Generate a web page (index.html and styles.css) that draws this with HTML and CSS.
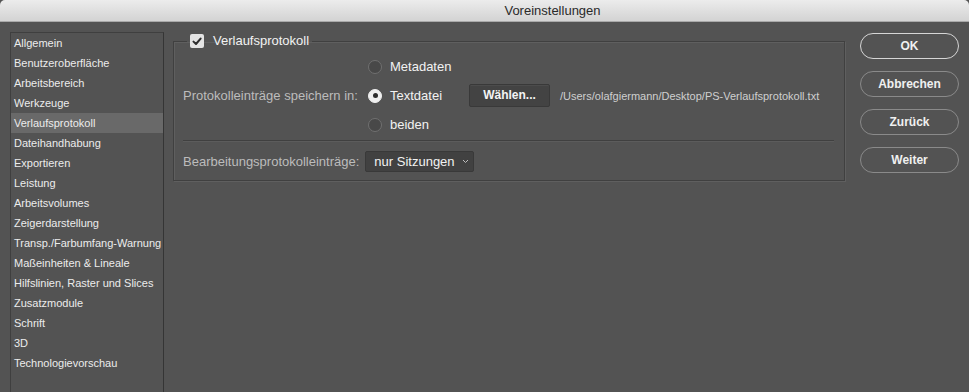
FILE: index.html
```html
<!DOCTYPE html>
<html lang="de">
<head>
  <meta charset="UTF-8" />
  <title>Voreinstellungen</title>
  <link rel="stylesheet" href="styles.css">
</head>
<body>

<div class="titlebar">Voreinstellungen</div>

<div class="dialog">
  <!-- Kategorien -->
  <ul class="sidebar">
    <li>Allgemein</li>
    <li>Benutzeroberfläche</li>
    <li>Arbeitsbereich</li>
    <li>Werkzeuge</li>
    <li class="selected">Verlaufsprotokoll</li>
    <li>Dateihandhabung</li>
    <li>Exportieren</li>
    <li>Leistung</li>
    <li>Arbeitsvolumes</li>
    <li>Zeigerdarstellung</li>
    <li>Transp./Farbumfang-Warnung</li>
    <li>Maßeinheiten &amp; Lineale</li>
    <li>Hilfslinien, Raster und Slices</li>
    <li>Zusatzmodule</li>
    <li>Schrift</li>
    <li>3D</li>
    <li>Technologievorschau</li>
  </ul>

  <div class="main">
    <fieldset class="group">
      <legend>
        <span class="checkbox">
          <svg width="10" height="9" viewBox="0 0 10 9"><path d="M1.5 4.6 L4 7 L8.6 1.6" fill="none" stroke="#2e2e2e" stroke-width="2" stroke-linecap="round" stroke-linejoin="round"/></svg>
        </span>
        Verlaufsprotokoll
      </legend>

      <div class="save-row">
        <div class="label save-label">Protokolleinträge speichern in:</div>
        <div class="options">
          <div class="option"><span class="radio"></span>Metadaten</div>
          <div class="option">
            <span class="radio checked"></span><span class="option-text">Textdatei</span>
            <span class="btn">Wählen...</span>
            <span class="path">/Users/olafgiermann/Desktop/PS-Verlaufsprotokoll.txt</span>
          </div>
          <div class="option"><span class="radio"></span>beiden</div>
        </div>
      </div>

      <div class="separator"></div>

      <div class="edit-row">
        <div class="label">Bearbeitungsprotokolleinträge:</div>
        <div class="select">
          nur Sitzungen
          <svg width="7" height="5" viewBox="0 0 7 5"><path d="M1 1 L3.5 3.5 L6 1" fill="none" stroke="#bdbdbd" stroke-width="1"/></svg>
        </div>
      </div>
    </fieldset>
  </div>

  <div class="actions">
    <div class="pill primary">OK</div>
    <div class="pill">Abbrechen</div>
    <div class="pill">Zurück</div>
    <div class="pill">Weiter</div>
  </div>
</div>

</body>
</html>
```

FILE: styles.css
```css
body {
  margin: 0;
  background-color: #535353;
  font-family: "Liberation Sans", Arial, sans-serif;
  color: #ececec;
  overflow: hidden;
  height: 392px;
}

.titlebar {
  height: 22px;
  line-height: 22px;
  box-sizing: border-box;
  padding-left: 136px;
  text-align: center;
  font-size: 13px;
  color: #2a2a2a;
  background: linear-gradient(#ececec, #d3d3d3);
  border-bottom: 1px solid #a9a9a9;
  border-radius: 5px 5px 0 0;
}

.dialog {
  display: flex;
  padding: 10px 10px 0 10px;
}

.sidebar {
  list-style: none;
  margin: 0;
  padding: 0;
  width: 152px;
  height: 359px;
  border: 1px solid #3f3f3f;
  border-bottom: none;
  border-right-color: #353535;
  font-size: 11px;
}

.sidebar li {
  height: 20px;
  line-height: 20px;
  padding-left: 3px;
  white-space: nowrap;
}

.sidebar li.selected {
  background-color: #696969;
}

.main {
  margin-left: 9px;
  width: 672px;
  padding-top: 2px;
}

.group {
  margin: 0;
  padding: 0 10px 8px 9px;
  border: 1px solid #404040;
  box-shadow: 1px 1px 0 #5f5f5f, inset 1px 1px 0 #5f5f5f;
  min-width: 0;
}

.group legend {
  margin-left: 4px;
  padding: 0 3px;
  font-size: 13px;
  color: #f2f2f2;
  height: 14px;
  line-height: 14px;
  display: flex;
  align-items: center;
  gap: 9px;
}

.checkbox {
  width: 14px;
  height: 14px;
  border-radius: 2px;
  background-color: #e4e4e4;
  display: flex;
  align-items: center;
  justify-content: center;
}

.label {
  font-size: 13px;
  color: #bcbcbc;
  white-space: nowrap;
}

.save-row {
  display: flex;
  align-items: center;
  padding-top: 4px;
}

.save-label {
  width: 174px;
  text-align: right;
}

.options {
  margin-left: 11px;
}

.option {
  height: 29px;
  display: flex;
  align-items: center;
  font-size: 13px;
  color: #f2f2f2;
  white-space: nowrap;
}

.radio {
  width: 12px;
  height: 12px;
  border-radius: 50%;
  border: 1px solid #707070;
  background-color: #484848;
  margin-right: 8px;
  position: relative;
}

.radio.checked {
  background-color: #efefef;
  border-color: #efefef;
}

/* Punkt im ausgewählten Radio */
.radio.checked::after {
  content: "";
  position: absolute;
  left: 3.5px;
  top: 3.5px;
  width: 5px;
  height: 5px;
  border-radius: 50%;
  background-color: #2c2c2c;
}

.option-text {
  width: 79px;
}

.btn {
  width: 79px;
  height: 21px;
  line-height: 21px;
  text-align: center;
  font-size: 12px;
  font-weight: bold;
  color: #f4f4f4;
  background-color: #434343;
  border: 1px solid #393939;
  box-shadow: inset 0 1px 0 #4c4c4c;
  border-radius: 2px;
}

.path {
  margin-left: 10px;
  font-size: 11px;
  color: #cfcfcf;
}

.separator {
  margin-top: 1px;
  height: 1px;
  background-color: #404040;
  border-bottom: 1px solid #5c5c5c;
}

.edit-row {
  display: flex;
  align-items: center;
  margin-top: 9px;
}

.select {
  margin-left: 6px;
  width: 95px;
  height: 19px;
  padding: 0 4px 0 8px;
  display: flex;
  align-items: center;
  justify-content: space-between;
  font-size: 13px;
  color: #f2f2f2;
  background-color: #414141;
  border: 1px solid #393939;
  border-radius: 2px;
}

.actions {
  margin-left: 15px;
  padding-top: 1px;
  display: flex;
  flex-direction: column;
  gap: 12px;
}

.pill {
  width: 97px;
  height: 24px;
  line-height: 24px;
  text-align: center;
  border: 1px solid #8a8a8a;
  border-radius: 13px;
  font-size: 12px;
  font-weight: bold;
  color: #f0f0f0;
}

.pill.primary {
  border-color: #d6d6d6;
}
```
